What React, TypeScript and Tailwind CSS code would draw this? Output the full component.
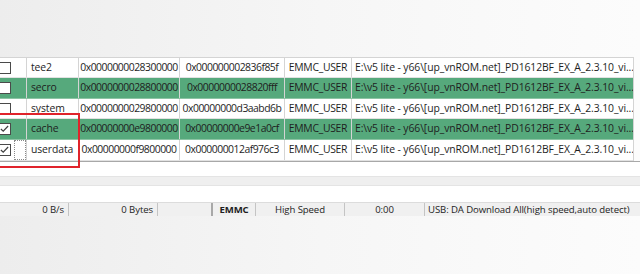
import React from "react";

type Row = {
  name: string;
  begin: string;
  end: string;
  checked: boolean;
  green: boolean;
  h: string;
  focus?: boolean;
};

const rows: Row[] = [
  { name: "tee2", begin: "0x0000000028300000", end: "0x000000002836f85f", checked: false, green: false, h: "h-[20px]" },
  { name: "secro", begin: "0x0000000028800000", end: "0x0000000028820fff", checked: false, green: true, h: "h-[21px]" },
  { name: "system", begin: "0x0000000029800000", end: "0x00000000d3aabd6b", checked: false, green: false, h: "h-[20px]" },
  { name: "cache", begin: "0x00000000e9800000", end: "0x00000000e9e1a0cf", checked: true, green: true, h: "h-[21px]" },
  { name: "userdata", begin: "0x00000000f9800000", end: "0x000000012af976c3", checked: true, green: false, h: "h-[21px]", focus: true },
];

const path = "E:\\v5 lite - y66\\[up_vnROM.net]_PD1612BF_EX_A_2.3.10_vi...";

function CheckBox({ checked }: { checked: boolean }) {
  return (
    <div className="relative -ml-[2px] w-[13px] h-[12px] border border-[#4a4a4a] bg-white">
      {checked && (
        <svg viewBox="0 0 12 11" className="absolute inset-0 w-full h-full">
          <path d="M2 5.5 L4.6 8 L10 2.2" fill="none" stroke="#404040" strokeWidth="1.3" />
        </svg>
      )}
    </div>
  );
}

export default function App() {
  return (
    <div
      className="relative w-[640px] h-[274px] overflow-hidden bg-gradient-to-r from-[#ededed] via-[#f6f6f6] to-[#fcfcfc] text-[#1e1e1e]"
      style={{ fontFamily: '"Open Sans", "Noto Sans", sans-serif' }}
    >
      <div className="h-[57px]" />

      <div className="w-[634px] border-t border-r border-[#d4d4d4] text-[10.4px] tracking-[-0.1px]">
        {rows.map((r) => (
          <div
            key={r.name}
            className={`flex ${r.h} border-b ${r.green ? "bg-[#56a97c] border-[#8cc4a4]" : "bg-white border-[#e2e2e2]"}`}
          >
            <div className="relative w-[27px] shrink-0 flex items-center border-r border-[#d4d4d4]">
              <CheckBox checked={r.checked} />
              {r.focus && (
                <div className="absolute left-[14px] top-0 w-[12px] h-full border border-dotted border-[#8a8a8a]" />
              )}
            </div>
            <div className="w-[52px] shrink-0 flex items-center pl-[4px] border-r border-[#d4d4d4]">{r.name}</div>
            <div className="w-[101px] shrink-0 flex items-center justify-center border-r border-[#d4d4d4] whitespace-nowrap tracking-[-0.5px]">{r.begin}</div>
            <div className="w-[105px] shrink-0 flex items-center justify-center border-r border-[#d4d4d4] whitespace-nowrap tracking-[-0.5px]">{r.end}</div>
            <div className="w-[67px] shrink-0 flex items-center justify-center border-r border-[#d4d4d4] whitespace-nowrap tracking-[-0.3px]">EMMC_USER</div>
            <div className="flex-1 flex items-center pl-[3px] whitespace-nowrap overflow-hidden">{path}</div>
          </div>
        ))}
      </div>

      <div className="w-full bg-white border-t border-[#a8a8a8]">
        <div className="h-[14px]" />
        <div className="h-[10px] bg-[#efefef] border-t border-[#e4e4e4] border-b border-[#b4b4b4]" />
        <div className="h-[16px]" />
      </div>

      <div className="flex h-[14px] bg-[#f0f0f0] border-t border-[#dcdcdc] text-[9.6px] tracking-[-0.1px] leading-[13px]">
        <div className="w-[68px] shrink-0 text-right pr-[4px]">0 B/s</div>
        <div className="w-[89px] shrink-0 text-right pr-[4px] border-l border-[#c4c4c4]">0 Bytes</div>
        <div className="w-[54px] shrink-0 border-l border-[#c4c4c4]" />
        <div className="w-[44px] shrink-0 text-center font-bold border-l-2 border-[#a8a8a8]">EMMC</div>
        <div className="w-[89px] shrink-0 text-center border-l border-[#c4c4c4]">High Speed</div>
        <div className="w-[80px] shrink-0 text-center border-l border-[#c4c4c4]">0:00</div>
        <div className="flex-1 pl-[3px] border-l border-[#c4c4c4] whitespace-nowrap">USB: DA Download All(high speed,auto detect)</div>
      </div>

      <div className="absolute left-[-5px] top-[113px] w-[85px] h-[55px] border-2 border-[#e0232b]" />
    </div>
  );
}
